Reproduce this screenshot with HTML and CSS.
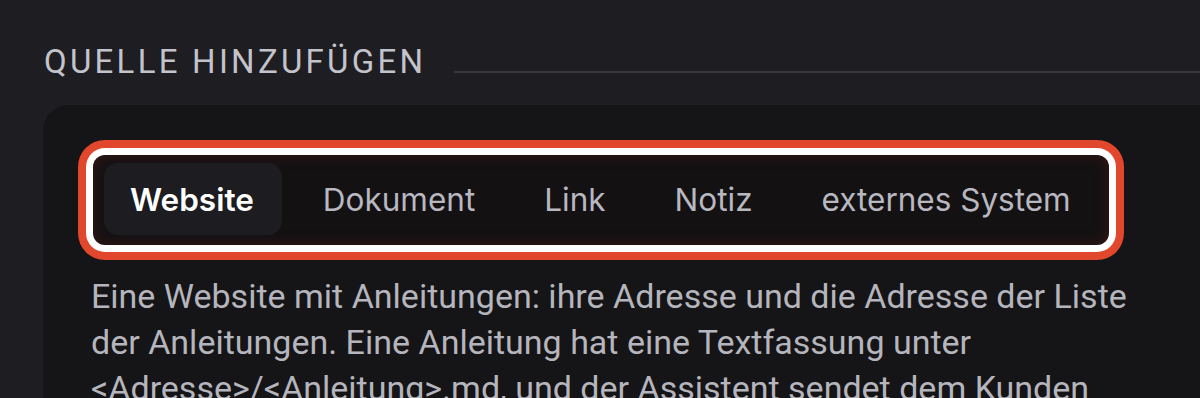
FILE: index.html
```html
<!DOCTYPE html>
<html lang="de">
<head>
<meta charset="utf-8">
<title>Quelle hinzufügen</title>
<link rel="stylesheet" href="styles.css">
</head>
<body>
<section class="section">
  <div class="section-head">
    <h2 class="section-title">Quelle hinzufügen</h2>
    <div class="section-rule"></div>
  </div>
  <div class="card">
    <div class="tabs" role="tablist">
      <button class="tab tab-active" role="tab">Website</button>
      <button class="tab" role="tab">Dokument</button>
      <button class="tab" role="tab">Link</button>
      <button class="tab" role="tab">Notiz</button>
      <button class="tab" role="tab">externes System</button>
    </div>
    <p class="desc">Eine Website mit Anleitungen: ihre Adresse und die Adresse der Liste der Anleitungen. Eine Anleitung hat eine Textfassung unter &lt;Adresse&gt;/&lt;Anleitung&gt;.md, und der Assistent sendet dem Kunden den Link zur Anleitung.</p>
  </div>
</section>
</body>
</html>
```

FILE: styles.css
```css
html, body {
  margin: 0;
  padding: 0;
  background: #1e1d22;
  height: 100%;
  overflow: hidden;
}

.section {
  padding: 44px 0 0 44px;
}

.section-head {
  display: flex;
  align-items: flex-end;
  gap: 28px;
}

.section-title {
  margin: 0;
  font-family: Roboto, "Liberation Sans", sans-serif;
  font-weight: 400;
  font-size: 33px;
  line-height: 36px;
  letter-spacing: 3.25px;
  text-transform: uppercase;
  color: #c3c3cb;
  white-space: nowrap;
}

.section-rule {
  flex: 1;
  height: 2px;
  margin-bottom: 7px;
  background: #38383e;
}

.card {
  margin: 25px 0 0 -1px;
  background: #151416;
  border-radius: 26px 0 0 0;
  padding: 50px 0 0 50px;
  min-height: 400px;
}

.tabs {
  display: inline-flex;
  gap: 13px;
  padding: 8px 10px 10px 11px;
  background: #141113;
  border-radius: 12px;
  box-shadow: inset 0 0 14px rgba(110, 36, 24, 0.4), 0 0 0 7px #ffffff, 0 0 0 15px #e0472c;
}

.tab {
  font-family: Inter, "Noto Sans", sans-serif;
  font-size: 31.5px;
  font-weight: 400;
  color: #b8b8c1;
  background: transparent;
  border: 0;
  padding: 0 28px;
  height: 72px;
  border-radius: 14px;
  cursor: pointer;
}

.tab-active {
  background: #1d1c20;
  color: #ffffff;
  font-weight: 600;
  padding: 0 28px 0 26px;
}

.desc {
  margin: 28px 0 0 -2px;
  width: 1060px;
  font-family: Roboto, "Liberation Sans", sans-serif;
  font-size: 34px;
  line-height: 46px;
  color: #b5b5bd;
}
```
